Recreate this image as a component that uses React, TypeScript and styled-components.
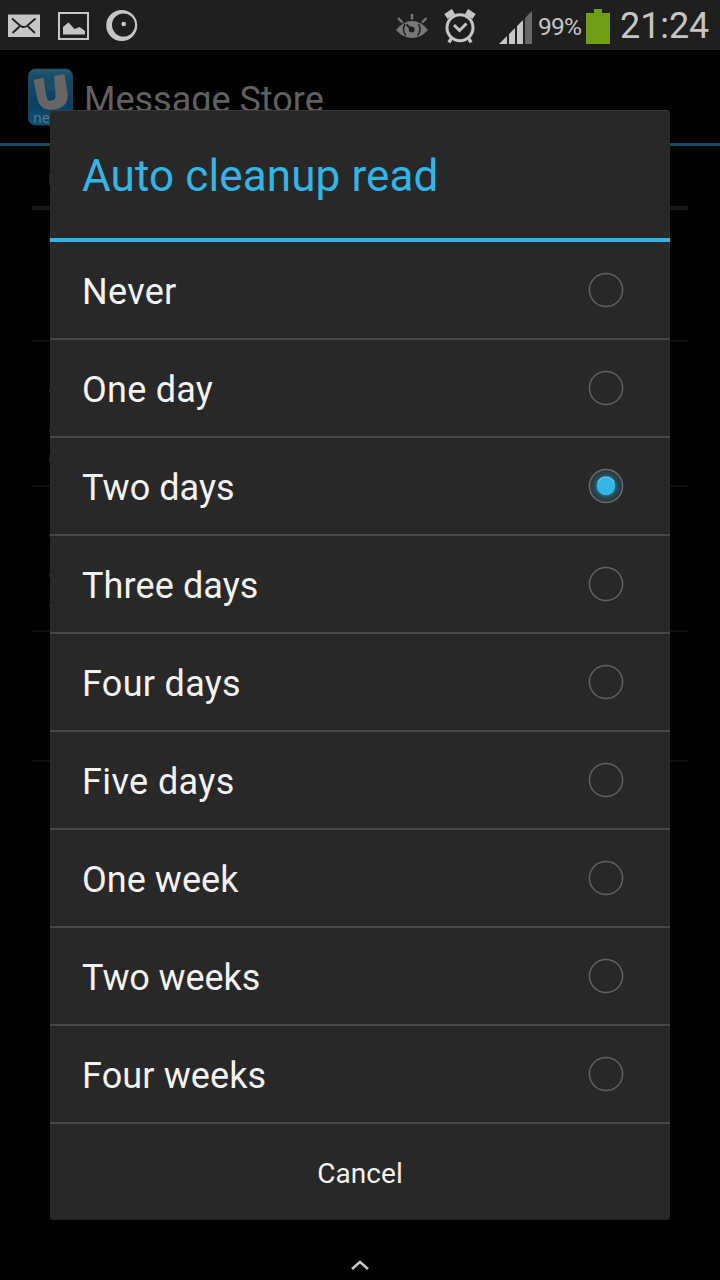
import React from "react";
import styled, { createGlobalStyle } from "styled-components";

const GlobalStyle = createGlobalStyle`
  * { box-sizing: border-box; }
  html, body { margin: 0; padding: 0; background: #000; }
  body { font-family: Roboto, "Noto Sans", sans-serif; overflow: hidden; }
`;

const Screen = styled.div`
  position: relative;
  display: flex;
  flex-direction: column;
  width: 720px;
  height: 1280px;
  background: #000;
  overflow: hidden;
`;

const StatusBar = styled.header`
  display: flex;
  justify-content: space-between;
  flex: none;
  height: 50px;
  background: #1f1f1f;
  color: #c6c6c6;
  svg { display: block; flex: none; }
`;

const StatusGroup = styled.div`
  display: flex;
  align-items: flex-start;
  height: 50px;
`;

const Percent = styled.span`
  width: 48px;
  padding-left: 6px;
  font-size: 24.5px;
  line-height: 54px;
  letter-spacing: -0.8px;
  white-space: nowrap;
`;

const Clock = styled.span`
  width: 100px;
  font-size: 36px;
  line-height: 53px;
  letter-spacing: -0.1px;
  white-space: nowrap;
`;

const ActionBar = styled.div`
  display: flex;
  flex: none;
  height: 96px;
  padding: 18px 28px 0;
  border-bottom: 3px solid #16495d;
  svg { display: block; flex: none; }
`;

const ScreenTitle = styled.h1`
  margin: 11px 0 0 10px;
  font-size: 36px;
  line-height: 42px;
  font-weight: 400;
  color: #606060;
  letter-spacing: 0;
  white-space: nowrap;
`;

const Preferences = styled.div`
  display: flex;
  flex-direction: column;
  padding: 0 32px;
`;

const Preference = styled.div<{ $height: number; $rule?: number }>`
  display: flex;
  flex-direction: column;
  height: ${(p) => p.$height}px;
  padding-left: 17px;
  border-bottom: ${(p) => p.$rule ?? 2}px solid ${(p) => (p.$rule ? "#161616" : "#0f0f0f")};
`;

const Edge = styled.i<{ $gap: number; $size: number }>`
  width: 1px;
  height: ${(p) => p.$size}px;
  margin-top: ${(p) => p.$gap}px;
  background: #202020;
`;

const Dialog = styled.section`
  position: absolute;
  left: 50px;
  top: 110px;
  display: flex;
  flex-direction: column;
  width: 620px;
  height: 1110px;
  background: #282828;
  border-radius: 4px;
  box-shadow: inset 0 1px 0 #3b3b3b, inset 0 -1px 0 #212121;
`;

const DialogTitle = styled.h2`
  flex: none;
  height: 132px;
  margin: 0;
  padding-left: 32px;
  border-bottom: 4px solid #33b5e5;
  color: #33b5e5;
  font-size: 44px;
  font-weight: 400;
  line-height: 132px;
  letter-spacing: 0.12px;
  white-space: nowrap;
`;

const Option = styled.div`
  display: flex;
  align-items: center;
  justify-content: space-between;
  flex: none;
  height: 98px;
  padding: 0 46px 0 32px;
  border-bottom: 2px solid #484848;
`;

const OptionLabel = styled.span<{ $spacing: number }>`
  padding-top: 3px;
  color: #f3f3f3;
  font-size: 36px;
  line-height: 44px;
  letter-spacing: ${(p) => p.$spacing}px;
  white-space: nowrap;
`;

const Radio = styled.span`
  display: flex;
  align-items: center;
  justify-content: center;
  width: 36px;
  height: 36px;
  svg { display: block; }
`;

const Cancel = styled.button`
  flex: 1;
  padding: 3px 0 0;
  border: 0;
  background: transparent;
  color: #f3f3f3;
  font: 400 28px/34px Roboto, sans-serif;
  letter-spacing: 0.05px;
`;

const NavHint = styled.footer`
  display: flex;
  justify-content: center;
  margin-top: auto;
  height: 22px;
`;

const options = [
  { label: "Never", spacing: 0.3 },
  { label: "One day", spacing: 0.25 },
  { label: "Two days", spacing: 0.05 },
  { label: "Three days", spacing: 0.1 },
  { label: "Four days", spacing: 0.3 },
  { label: "Five days", spacing: 0.4 },
  { label: "One week", spacing: 0.05 },
  { label: "Two weeks", spacing: -0.1 },
  { label: "Four weeks", spacing: 0.12 },
];

const NotificationIcons = () => (
  <svg width="150" height="50" viewBox="0 0 150 50" fill="none">
    <path d="M8 14.5H40V37H8Z" fill="#c6c6c6" />
    <path d="M12 18.5L20.5 26Q23.5 28 27 26L35.5 18.5M12.5 33L19.5 26.5M35 33L28 26.5" stroke="#1f1f1f" strokeWidth="1.9" />
    <path d="M59 13H88V39H59Z" stroke="#c6c6c6" strokeWidth="2" />
    <path d="M63 34.5V27L68.500 22.500L74.500 29L79.500 27L85 31V34.500Z" fill="#c6c6c6" />
    <path fillRule="evenodd" d="M121.700 10A15.500 15.500 0 1 0 121.700 41A15.500 15.500 0 1 0 121.700 10ZM123.500 13.500A11.500 11.500 0 1 1 123.500 36.500A11.500 11.500 0 1 1 123.500 13.500Z" fill="#c6c6c6" />
    <circle cx="123.700" cy="24" r="2.300" fill="#c6c6c6" />
  </svg>
);

const SystemIcons = () => (
  <svg width="152" height="50" viewBox="380 0 152 50" fill="none">
    <path d="M396 30Q403 21 412 21Q421 21 428 30Q421 38 412 38Q403 38 396 30Z" fill="#777" />
    <path d="M405 24Q401.500 30 406 35.500M418.500 24Q422 30 417.500 35.500" stroke="#1f1f1f" strokeWidth="1.500" />
    <circle cx="411.700" cy="29.500" r="2.900" fill="#1f1f1f" />
    <path d="M411.500 29.500L406.500 24.500" stroke="#1f1f1f" strokeWidth="2" />
    <path d="M412 14V19.500M398 18L402.500 22.500M426.500 18L422 22.500" stroke="#777" strokeWidth="2.400" />
    <circle cx="460" cy="27.700" r="13" stroke="#c6c6c6" strokeWidth="3" />
    <path d="M454 25L459.500 30.500L466.500 23.500" stroke="#c6c6c6" strokeWidth="3" />
    <path d="M446 16.500L453.500 11.500M474 16.500L466.500 11.500" stroke="#c6c6c6" strokeWidth="5.800" />
    <path d="M451.500 38L449 42.500M468.500 38L471 42.500" stroke="#c6c6c6" strokeWidth="3.500" />
    <path d="M499 44L507 36V44ZM509 34L515 28V44H509ZM517 26L523 20V44H517Z" fill="#c6c6c6" />
    <path d="M525 18L532 11V44H525Z" fill="#686868" />
  </svg>
);

const AppIcon = () => (
  <svg width="46" height="58" viewBox="0 0 46 58">
    <defs>
      <linearGradient id="tile" x1="0" y1="0" x2="0" y2="1">
        <stop offset="0" stopColor="#2c5a72" />
        <stop offset="0.12" stopColor="#184c68" />
        <stop offset="0.6" stopColor="#0a4060" />
        <stop offset="1" stopColor="#0c5075" />
      </linearGradient>
    </defs>
    <rect x="0.500" y="1" width="44" height="56" rx="7" fill="url(#tile)" stroke="#1b4e66" strokeWidth="0.800" />
    <path d="M5.700 12L15.500 9.500L18.500 29Q19.500 34 24 32.500Q28 31.500 27.500 27L26 8L36.500 6L39.500 25Q41.500 39 26 41.500Q11.500 43.500 9 29Z" fill="#666" />
    <path d="M19 23Q18 17 20 14L21 19L23 11L25 20L26 15L26.500 23Z" fill="#24516a" opacity="0.6" />
    <text x="5" y="54.500" fill="#5d7986" fontFamily="Noto Sans, sans-serif" fontSize="14">ne</text>
  </svg>
);

const RadioMark = ({ checked }: { checked: boolean }) => (
  <svg width="36" height="36" viewBox="0 0 36 36">
    <defs>
      <radialGradient id="glow">
        <stop offset="0.45" stopColor="#20728e" />
        <stop offset="0.75" stopColor="#264650" />
        <stop offset="1" stopColor="#2c3438" />
      </radialGradient>
    </defs>
    <circle cx="18" cy="18" r="16.600" fill={checked ? "url(#glow)" : "none"} stroke={checked ? "#686a6b" : "#606060"} strokeWidth="1.500" />
    {checked && <circle cx="18" cy="18" r="9.300" fill="#33b5e5" />}
    {checked && <path d="M9.800 14.500A9 9 0 0 1 26.200 14.500" fill="none" stroke="#70c9e8" strokeWidth="1.200" />}
  </svg>
);

export default function App() {
  return (
    <>
      <GlobalStyle />
      <Screen>
        <StatusBar>
          <NotificationIcons />
          <StatusGroup>
            <SystemIcons />
            <Percent>99%</Percent>
            <svg width="40" height="50" viewBox="0 0 40 50">
              <path d="M6 13H14V9H22V13H30V44H6Z" fill="#709e19" />
            </svg>
            <Clock>21:24</Clock>
          </StatusGroup>
        </StatusBar>
        <ActionBar>
          <AppIcon />
          <ScreenTitle>Message Store</ScreenTitle>
        </ActionBar>
        <Preferences>
          <Preference $height={64} $rule={4}>
            <Edge $gap={28} $size={11} />
          </Preference>
          <Preference $height={132} />
          <Preference $height={145}>
            <Edge $gap={47} $size={3} />
            <Edge $gap={37} $size={3} />
            <Edge $gap={23} $size={7} />
          </Preference>
          <Preference $height={145}>
            <Edge $gap={47} $size={3} />
            <Edge $gap={37} $size={3} />
            <Edge $gap={28} $size={2} />
          </Preference>
          <Preference $height={130} />
        </Preferences>
        <NavHint>
          <svg width="22" height="22" viewBox="0 0 22 22">
            <path d="M3 11L11 4L19 11" fill="none" stroke="#c6c6c6" strokeWidth="2.600" />
          </svg>
        </NavHint>
        <Dialog role="dialog">
          <DialogTitle>Auto cleanup read</DialogTitle>
          {options.map(({ label, spacing }) => (
            <Option key={label}>
              <OptionLabel $spacing={spacing}>{label}</OptionLabel>
              <Radio>
                <RadioMark checked={label === "Two days"} />
              </Radio>
            </Option>
          ))}
          <Cancel>Cancel</Cancel>
        </Dialog>
      </Screen>
    </>
  );
}
